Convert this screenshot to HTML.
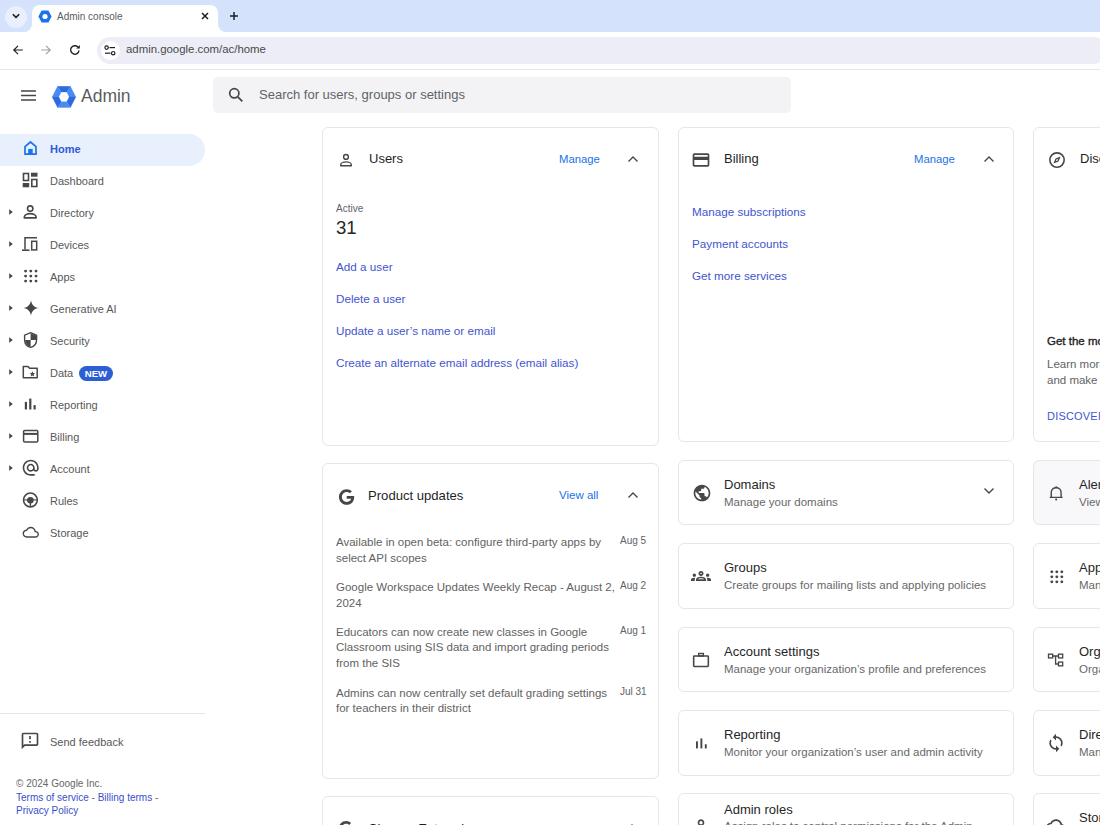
<!DOCTYPE html>
<html><head><meta charset="utf-8">
<style>
*{box-sizing:border-box;margin:0;padding:0}
html,body{width:1100px;height:825px;overflow:hidden;background:#fff;font-family:"Liberation Sans",sans-serif;color:#1f1f1f}
.abs{position:absolute}
#tabs{position:absolute;left:0;top:0;width:1100px;height:32px;background:#d5e2fc}
#tab{position:absolute;left:32px;top:5px;width:186px;height:27px;background:#fff;border-radius:8px 8px 0 0}
#tb{position:absolute;left:0;top:32px;width:1100px;height:38px;background:#fff;border-bottom:1px solid #e5e5ea}
#omni{position:absolute;left:97px;top:37px;width:1010px;height:27px;border-radius:14px;background:#ecedf6}
.txt{position:absolute;white-space:nowrap}
.card{position:absolute;border:1px solid #e6e6ea;border-radius:6px;background:#fff}
.nav{position:absolute;left:0;width:205px;height:32px}
.nav .lbl{position:absolute;left:49px;top:11px;font-size:11px;color:#444746}
.nav svg{position:absolute;left:22px;top:8px}
.arr{position:absolute;left:9px;top:13px;width:0;height:0;border-left:4px solid #3c4043;border-top:3.5px solid transparent;border-bottom:3.5px solid transparent}
.link{position:absolute;font-size:12px;color:#3b4ecc;white-space:nowrap}
</style></head><body>

<div id="tabs"></div>
<div class="abs" style="left:5px;top:6px;width:22px;height:22px;border-radius:50%;background:#e9effc"></div>
<svg class="abs" style="left:10px;top:10px" width="12" height="12" viewBox="0 0 12 12"><path d="M2.8 4.2 L6 7.4 L9.2 4.2" fill="none" stroke="#1f1f1f" stroke-width="1.6"/></svg>
<div id="tab"></div>
<svg class="abs" style="left:24px;top:24px" width="8" height="8" viewBox="0 0 8 8"><path d="M0 8 A8 8 0 0 0 8 0 L8 8 Z" fill="#fff"/></svg>
<svg class="abs" style="left:218px;top:24px" width="8" height="8" viewBox="0 0 8 8"><path d="M8 8 A8 8 0 0 1 0 0 L0 8 Z" fill="#fff"/></svg>
<svg class="abs" style="left:38px;top:10px" width="14" height="13" viewBox="0 0 14 13"><path d="M3.6 0.5 L10.4 0.5 L13.6 6.5 L10.4 12.5 L3.6 12.5 L0.4 6.5 Z" fill="#1a73e8"/><circle cx="7" cy="6.5" r="2.6" fill="#fff"/></svg>
<div class="txt" style="left:57px;top:11px;font-size:10px;color:#5c5c5c">Admin console</div>
<svg class="abs" style="left:200px;top:11px" width="10" height="10" viewBox="0 0 10 10"><path d="M2 2 L8 8 M8 2 L2 8" stroke="#1f1f1f" stroke-width="1.5"/></svg>
<svg class="abs" style="left:228px;top:10px" width="12" height="12" viewBox="0 0 12 12"><path d="M6 2 V10 M2 6 H10" stroke="#1f1f1f" stroke-width="1.5"/></svg>
<div id="tb"></div>
<svg class="abs" style="left:12px;top:44px" width="12" height="12" viewBox="0 0 12 12"><path d="M10.8 6 H2 M6 1.8 L1.8 6 L6 10.2" fill="none" stroke="#1f1f1f" stroke-width="1.2"/></svg>
<svg class="abs" style="left:40px;top:44px" width="12" height="12" viewBox="0 0 12 12"><path d="M1.2 6 H10 M6 1.8 L10.2 6 L6 10.2" fill="none" stroke="#a0a0a0" stroke-width="1.2"/></svg>
<svg class="abs" style="left:69px;top:44px" width="12" height="12" viewBox="0 0 12 12"><path d="M10 6.5 A4.2 4.2 0 1 1 8.8 3" fill="none" stroke="#1f1f1f" stroke-width="1.4"/><path d="M10.8 1 V4.6 H7.2 Z" fill="#1f1f1f"/></svg>
<div id="omni"></div>
<div class="abs" style="left:101px;top:41px;width:19px;height:19px;border-radius:50%;background:#fff"></div>
<svg class="abs" style="left:104px;top:45px" width="12" height="11" viewBox="0 0 12 11"><circle cx="2.6" cy="2.6" r="1.7" fill="none" stroke="#1f1f1f" stroke-width="1.2"/><path d="M5.5 2.6 H11" stroke="#1f1f1f" stroke-width="1.2"/><circle cx="9.2" cy="8.2" r="1.7" fill="none" stroke="#1f1f1f" stroke-width="1.2"/><path d="M1 8.2 H6.5" stroke="#1f1f1f" stroke-width="1.2"/></svg>
<div class="txt" style="left:126px;top:43px;font-size:11.4px;color:#4a4a4a">admin.google.com/ac/home</div>

<!-- app header -->
<svg class="abs" style="left:21px;top:90px" width="15" height="11" viewBox="0 0 15 11"><path d="M0 1 H15 M0 5.5 H15 M0 10 H15" stroke="#444746" stroke-width="1.3"/></svg>
<svg class="abs" style="left:52px;top:86px" width="24" height="22" viewBox="0 0 24 22"><path d="M5.6 0.2 L18.4 0.2 L14.8 6 L9.2 6 Z" fill="#2c6ae0" stroke="#2c6ae0" stroke-width="0.3"/><path d="M18.4 0.2 L23.8 11 L17.2 10.9 L14.8 6 Z" fill="#4a8af4" stroke="#4a8af4" stroke-width="0.3"/><path d="M23.8 11 L18.4 21.5 L14.8 15.8 L17.2 10.9 Z" fill="#2c6ae0" stroke="#2c6ae0" stroke-width="0.3"/><path d="M18.4 21.5 L5.6 21.5 L9.2 15.8 L14.8 15.8 Z" fill="#4a8af4" stroke="#4a8af4" stroke-width="0.3"/><path d="M5.6 21.5 L0.2 11 L6.8 10.9 L9.2 15.8 Z" fill="#2c6ae0" stroke="#2c6ae0" stroke-width="0.3"/><path d="M0.2 11 L5.6 0.2 L9.2 6 L6.8 10.9 Z" fill="#4a8af4" stroke="#4a8af4" stroke-width="0.3"/></svg>
<div class="txt" style="left:81px;top:86px;font-size:17.5px;color:#5a5c5f">Admin</div>
<div class="abs" style="left:213px;top:77px;width:578px;height:36px;background:#f3f3f6;border-radius:5px"></div>
<svg class="abs" style="left:228px;top:87px" width="16" height="16" viewBox="0 0 16 16"><circle cx="6.3" cy="6.3" r="4.6" fill="none" stroke="#444746" stroke-width="1.7"/><path d="M9.8 9.8 L14.3 14.3" stroke="#444746" stroke-width="1.8"/></svg>
<div class="txt" style="left:259px;top:87px;font-size:13px;color:#5f6368">Search for users, groups or settings</div>

<!-- sidebar highlight -->
<div class="abs" style="left:0;top:134px;width:205px;height:32px;background:#e8effd;border-radius:0 16px 16px 0"></div>

<!-- cards -->
<div class="card" style="left:322px;top:127px;width:337px;height:319px"></div>
<div class="card" style="left:678px;top:127px;width:336px;height:315px"></div>
<div class="card" style="left:1033px;top:127px;width:100px;height:315px"></div>
<div class="card" style="left:322px;top:463px;width:337px;height:316px"></div>
<div class="card" style="left:322px;top:796px;width:337px;height:100px"></div>

<div class="card" style="left:678px;top:460px;width:336px;height:65px"></div>
<div class="card" style="left:678px;top:543px;width:336px;height:66px"></div>
<div class="card" style="left:678px;top:627px;width:336px;height:65px"></div>
<div class="card" style="left:678px;top:710px;width:336px;height:66px"></div>
<div class="card" style="left:678px;top:793px;width:336px;height:65px"></div>

<div class="card" style="left:1033px;top:460px;width:100px;height:65px;background:#f8f8fa"></div>
<div class="card" style="left:1033px;top:543px;width:100px;height:66px"></div>
<div class="card" style="left:1033px;top:627px;width:100px;height:65px"></div>
<div class="card" style="left:1033px;top:710px;width:100px;height:66px"></div>
<div class="card" style="left:1033px;top:793px;width:100px;height:65px"></div>

<!-- sidebar items -->
<svg class="abs" style="left:20px;top:138px" width="20" height="20" viewBox="0 0 20 20"><path d="M5 16.2 V8.6 L10.5 4 L16 8.6 V16.2 Z" fill="none" stroke="#1a73e8" stroke-width="1.7" stroke-linejoin="round"/><rect x="8.2" y="10.9" width="4.5" height="5.5" fill="#1a73e8"/></svg>
<div class="txt" style="left:50px;top:143px;font-size:11px;font-weight:bold;color:#2f5ad6">Home</div>
<svg class="abs" style="left:20px;top:170px" width="20" height="20" viewBox="0 0 20 20"><rect x="3.5" y="3.5" width="5" height="7" fill="none" stroke="#474747" stroke-width="1.6"/><rect x="11" y="2.7" width="6.5" height="4" fill="#474747"/><rect x="2.7" y="13" width="6.5" height="4.3" fill="#474747"/><rect x="11.8" y="9.5" width="5" height="7" fill="none" stroke="#474747" stroke-width="1.6"/></svg>
<div class="txt" style="left:50px;top:175px;font-size:11px;color:#585858">Dashboard</div>
<svg class="abs" style="left:20px;top:202px" width="20" height="20" viewBox="0 0 20 20"><circle cx="10.2" cy="6.6" r="2.7" fill="none" stroke="#474747" stroke-width="1.6"/><path d="M4.3 15.9 V14.9 C4.3 12.7 7.6 11.6 10.2 11.6 C12.8 11.6 16.1 12.7 16.1 14.9 V15.9 Z" fill="none" stroke="#474747" stroke-width="1.6" stroke-linejoin="round"/></svg>
<svg class="abs" style="left:8px;top:208px" width="6" height="8" viewBox="0 0 6 8"><path d="M1.2 1.2 L4.8 4 L1.2 6.8 Z" fill="#444746"/></svg>
<div class="txt" style="left:50px;top:207px;font-size:11px;color:#585858">Directory</div>
<svg class="abs" style="left:20px;top:234px" width="20" height="20" viewBox="0 0 20 20"><path d="M17 3.7 H5 V15.5" fill="none" stroke="#474747" stroke-width="1.5"/><path d="M2 16.2 H9.5" stroke="#474747" stroke-width="1.6"/><rect x="11.7" y="7.3" width="5" height="8.6" fill="none" stroke="#474747" stroke-width="1.5"/></svg>
<svg class="abs" style="left:8px;top:240px" width="6" height="8" viewBox="0 0 6 8"><path d="M1.2 1.2 L4.8 4 L1.2 6.8 Z" fill="#444746"/></svg>
<div class="txt" style="left:50px;top:239px;font-size:11px;color:#585858">Devices</div>
<svg class="abs" style="left:20px;top:266px" width="20" height="20" viewBox="0 0 20 20"><circle cx="5.6" cy="5.1" r="1.45" fill="#474747"/><circle cx="5.6" cy="10.1" r="1.45" fill="#474747"/><circle cx="5.6" cy="15.1" r="1.45" fill="#474747"/><circle cx="10.8" cy="5.1" r="1.45" fill="#474747"/><circle cx="10.8" cy="10.1" r="1.45" fill="#474747"/><circle cx="10.8" cy="15.1" r="1.45" fill="#474747"/><circle cx="16" cy="5.1" r="1.45" fill="#474747"/><circle cx="16" cy="10.1" r="1.45" fill="#474747"/><circle cx="16" cy="15.1" r="1.45" fill="#474747"/></svg>
<svg class="abs" style="left:8px;top:272px" width="6" height="8" viewBox="0 0 6 8"><path d="M1.2 1.2 L4.8 4 L1.2 6.8 Z" fill="#444746"/></svg>
<div class="txt" style="left:50px;top:271px;font-size:11px;color:#585858">Apps</div>
<svg class="abs" style="left:21.3px;top:298px" width="20" height="20" viewBox="0 0 20 20"><path d="M10 2.3 C10.6 6.8 13.2 9.4 17.7 10 C13.2 10.6 10.6 13.2 10 17.7 C9.4 13.2 6.8 10.6 2.3 10 C6.8 9.4 9.4 6.8 10 2.3 Z" fill="#474747"/></svg>
<svg class="abs" style="left:8px;top:304px" width="6" height="8" viewBox="0 0 6 8"><path d="M1.2 1.2 L4.8 4 L1.2 6.8 Z" fill="#444746"/></svg>
<div class="txt" style="left:50px;top:303px;font-size:11px;color:#585858">Generative AI</div>
<svg class="abs" style="left:20px;top:330px" width="20" height="20" viewBox="0 0 20 20"><path d="M10.6 2.7 L16.6 5.2 V9.6 C16.6 13.4 14.2 16.6 10.6 17.4 C7 16.6 4.6 13.4 4.6 9.6 V5.2 Z" fill="none" stroke="#474747" stroke-width="1.4"/><path d="M10.6 3.2 L16.1 5.5 V10 H10.6 Z" fill="#474747"/><path d="M5.1 10 H10.6 V16.9 C7.6 16 5.5 13.4 5.1 10 Z" fill="#474747"/></svg>
<svg class="abs" style="left:8px;top:336px" width="6" height="8" viewBox="0 0 6 8"><path d="M1.2 1.2 L4.8 4 L1.2 6.8 Z" fill="#444746"/></svg>
<div class="txt" style="left:50px;top:335px;font-size:11px;color:#585858">Security</div>
<svg class="abs" style="left:20px;top:362px" width="20" height="20" viewBox="0 0 20 20"><path d="M3.3 4.6 H8 L9.7 6.3 H17.2 V15.7 H3.3 Z" fill="none" stroke="#474747" stroke-width="1.5" stroke-linejoin="round"/><path d="M12.4 9.3 L13.2 11.1 L15.1 11.2 L13.6 12.5 L14.1 14.4 L12.4 13.4 L10.7 14.4 L11.2 12.5 L9.7 11.2 L11.6 11.1 Z" fill="#474747"/></svg>
<svg class="abs" style="left:8px;top:368px" width="6" height="8" viewBox="0 0 6 8"><path d="M1.2 1.2 L4.8 4 L1.2 6.8 Z" fill="#444746"/></svg>
<div class="txt" style="left:50px;top:367px;font-size:11px;color:#585858">Data</div>
<svg class="abs" style="left:20px;top:394px" width="20" height="20" viewBox="0 0 20 20"><rect x="4.8" y="7.9" width="2.2" height="7.6" fill="#474747"/><rect x="9.2" y="4.6" width="2.2" height="10.9" fill="#474747"/><rect x="13.5" y="11.1" width="2.2" height="4.4" fill="#474747"/></svg>
<svg class="abs" style="left:8px;top:400px" width="6" height="8" viewBox="0 0 6 8"><path d="M1.2 1.2 L4.8 4 L1.2 6.8 Z" fill="#444746"/></svg>
<div class="txt" style="left:50px;top:399px;font-size:11px;color:#585858">Reporting</div>
<svg class="abs" style="left:20px;top:426px" width="20" height="20" viewBox="0 0 20 20"><rect x="3.6" y="4.5" width="14.2" height="11.4" rx="1" fill="none" stroke="#474747" stroke-width="1.5"/><rect x="3.8" y="6.9" width="13.8" height="2" fill="#474747"/></svg>
<svg class="abs" style="left:8px;top:432px" width="6" height="8" viewBox="0 0 6 8"><path d="M1.2 1.2 L4.8 4 L1.2 6.8 Z" fill="#444746"/></svg>
<div class="txt" style="left:50px;top:431px;font-size:11px;color:#585858">Billing</div>
<svg class="abs" style="left:20.8px;top:458px" width="20" height="20" viewBox="0 0 20 20"><g transform="translate(0.1 0.1) scale(0.8)"><path fill="#474747" d="M12 1.95c-5.52 0-10 4.48-10 10s4.48 10 10 10h5v-2h-5c-4.34 0-8-3.66-8-8s3.66-8 8-8 8 3.66 8 8v1.430c0 .79-.71 1.57-1.5 1.57s-1.5-.78-1.5-1.57v-1.43c0-2.76-2.24-5-5-5s-5 2.24-5 5 2.24 5 5 5c1.38 0 2.64-.56 3.54-1.47.65.89 1.77 1.47 2.96 1.47 1.97 0 3.5-1.6 3.5-3.57v-1.43c0-5.52-4.48-10-10-10zm0 13c-1.66 0-3-1.34-3-3s1.34-3 3-3 3 1.34 3 3-1.34 3-3 3z"/></g></svg>
<svg class="abs" style="left:8px;top:464px" width="6" height="8" viewBox="0 0 6 8"><path d="M1.2 1.2 L4.8 4 L1.2 6.8 Z" fill="#444746"/></svg>
<div class="txt" style="left:50px;top:463px;font-size:11px;color:#585858">Account</div>
<svg class="abs" style="left:20px;top:490px" width="20" height="20" viewBox="0 0 20 20"><circle cx="10.4" cy="10" r="6.9" fill="none" stroke="#474747" stroke-width="1.5"/><path d="M3.6 9.9 H17.2" stroke="#474747" stroke-width="1.1"/><circle cx="10.4" cy="10.3" r="3.3" fill="#474747"/><path d="M10.4 11 V17" stroke="#474747" stroke-width="1.4"/></svg>
<div class="txt" style="left:50px;top:495px;font-size:11px;color:#585858">Rules</div>
<svg class="abs" style="left:20px;top:522px" width="20" height="20" viewBox="0 0 20 20"><g transform="translate(2.6 2.1) scale(0.68)"><path fill="#474747" d="M12 6c2.62 0 4.88 1.86 5.39 4.43l.3 1.5 1.53.11c1.56.1 2.78 1.41 2.78 2.96 0 1.65-1.35 3-3 3H6c-2.21 0-4-1.79-4-4 0-2.05 1.53-3.76 3.56-3.97l1.07-.11.5-.95C8.08 7.14 9.94 6 12 6m0-2C9.11 4 6.6 5.64 5.35 8.04 2.34 8.36 0 10.91 0 14c0 3.31 2.69 6 6 6h13c2.76 0 5-2.24 5-5 0-2.64-2.05-4.78-4.65-4.96C18.67 6.59 15.64 4 12 4z"/></g></svg>
<div class="txt" style="left:50px;top:527px;font-size:11px;color:#585858">Storage</div>
<div class="abs" style="left:79px;top:366px;width:34px;height:15px;border-radius:8px;background:#2c5fd4"></div>
<div class="txt" style="left:79px;top:367.5px;width:34px;text-align:center;font-size:9.6px;font-weight:bold;color:#fff">NEW</div>
<svg class="abs" style="left:20px;top:731px" width="20" height="20" viewBox="0 0 20 20"><g transform="scale(0.8333)"><path fill="#474747" d="M20 2H4c-1.1 0-1.99.9-1.99 2L2 22l4-4h14c1.1 0 2-.9 2-2V4c0-1.1-.9-2-2-2zm0 14H5.17l-.59.59-.58.58V4h16v12zm-9-4h2v2h-2zm0-6h2v4h-2z"/></g></svg>
<div class="txt" style="left:50px;top:736px;font-size:11px;color:#585858">Send feedback</div>
<div class="txt" style="left:16px;top:778px;font-size:10px;color:#666">© 2024 Google Inc.</div>
<div class="txt" style="left:16px;top:792px;font-size:10px;color:#5f6368"><span style="color:#3b4ecc">Terms of service</span> - <span style="color:#3b4ecc">Billing terms</span> -</div>
<div class="txt" style="left:16px;top:804.6px;font-size:10px;color:#3b4ecc">Privacy Policy</div>
<!-- sidebar divider -->
<div class="abs" style="left:0;top:713px;width:205px;height:1px;background:#e3e3e3"></div>

<!-- CARDS -->
<svg class="abs" style="left:336px;top:150px" width="20" height="20" viewBox="0 0 20 20"><circle cx="10" cy="6.9" r="2.4" fill="none" stroke="#474747" stroke-width="1.4"/><path d="M4.7 15.7 V15 C4.7 12.9 7.8 11.9 10 11.9 C12.2 11.9 15.3 12.9 15.3 15 V15.7 Z" fill="none" stroke="#474747" stroke-width="1.4" stroke-linejoin="round"/></svg>
<div class="txt" style="left:369px;top:151.2px;font-size:13px;color:#1f1f1f">Users</div>
<div class="txt" style="left:559px;top:153.3px;font-size:11.3px;color:#1a73e8">Manage</div>
<svg class="abs" style="left:627px;top:154.5px" width="12" height="8" viewBox="0 0 12 8"><path d="M1.5 6.5 L6 2 L10.5 6.5" fill="none" stroke="#474747" stroke-width="1.4"/></svg>
<div class="txt" style="left:336px;top:202.6px;font-size:10px;color:#5f6368">Active</div>
<div class="txt" style="left:336px;top:217.1px;font-size:18.6px;color:#262626">31</div>
<div class="txt" style="left:336px;top:259.6px;font-size:11.7px;color:#4355cf">Add a user</div>
<div class="txt" style="left:336px;top:291.6px;font-size:11.7px;color:#4355cf">Delete a user</div>
<div class="txt" style="left:336px;top:323.6px;font-size:11.7px;color:#4355cf">Update a user’s name or email</div>
<div class="txt" style="left:336px;top:355.6px;font-size:11.7px;color:#4355cf">Create an alternate email address (email alias)</div>
<svg class="abs" style="left:691px;top:150px" width="20" height="20" viewBox="0 0 24 24"><path fill="#474747" d="M20 4H4c-1.11 0-1.99.89-1.99 2L2 18c0 1.11.89 2 2 2h16c1.11 0 2-.89 2-2V6c0-1.11-.89-2-2-2zm0 14H4v-6h16v6zm0-10H4V6h16v2z"/></svg>
<div class="txt" style="left:724px;top:151.2px;font-size:13px;color:#1f1f1f">Billing</div>
<div class="txt" style="left:914px;top:153.3px;font-size:11.3px;color:#1a73e8">Manage</div>
<svg class="abs" style="left:982.5px;top:154.5px" width="12" height="8" viewBox="0 0 12 8"><path d="M1.5 6.5 L6 2 L10.5 6.5" fill="none" stroke="#474747" stroke-width="1.4"/></svg>
<div class="txt" style="left:692px;top:205.2px;font-size:11.7px;color:#4355cf">Manage subscriptions</div>
<div class="txt" style="left:692px;top:237.2px;font-size:11.7px;color:#4355cf">Payment accounts</div>
<div class="txt" style="left:692px;top:269.2px;font-size:11.7px;color:#4355cf">Get more services</div>
<svg class="abs" style="left:1047px;top:150px" width="20" height="20" viewBox="0 0 24 24"><circle cx="12" cy="12" r="8.6" fill="none" stroke="#474747" stroke-width="1.9"/><path d="M14.8 9.2 L13.2 13.2 L9.2 14.8 L10.8 10.8 Z" fill="none" stroke="#474747" stroke-width="1.6"/></svg>
<div class="txt" style="left:1080px;top:151.2px;font-size:13px;color:#1f1f1f">Discover</div>
<div class="txt" style="left:1047px;top:335.4px;font-size:11.5px;color:#1f1f1f;-webkit-text-stroke:0.35px #1f1f1f">Get the most out of Google Workspace</div>
<div class="txt" style="left:1047px;top:358.4px;font-size:11.5px;color:#5f6368">Learn more about features</div>
<div class="txt" style="left:1047px;top:374.4px;font-size:11.5px;color:#5f6368">and make the most of them</div>
<div class="txt" style="left:1047px;top:409.9px;font-size:11px;color:#4355cf;letter-spacing:0.2px">DISCOVER</div>
<svg class="abs" style="left:335.5px;top:486.5px" width="21" height="21" viewBox="0 0 24 24"><path fill="#474747" d="M12.24 10.29v3.22h5.02c-.2 1.2-1.5 3.52-5.02 3.52-3.02 0-5.49-2.5-5.49-5.6s2.47-5.6 5.49-5.6c1.72 0 2.87.73 3.53 1.36l2.4-2.32C16.63 3.43 14.64 2.5 12.24 2.5 7.33 2.5 3.35 6.48 3.35 11.43s3.98 8.93 8.89 8.93c5.13 0 8.54-3.61 8.54-8.69 0-.58-.06-1.03-.14-1.47z"/></svg>
<div class="txt" style="left:368px;top:487.7px;font-size:13.1px;color:#1f1f1f">Product updates</div>
<div class="txt" style="left:559px;top:489.4px;font-size:11.5px;color:#1a73e8">View all</div>
<svg class="abs" style="left:627px;top:491px" width="12" height="8" viewBox="0 0 12 8"><path d="M1.5 6.5 L6 2 L10.5 6.5" fill="none" stroke="#474747" stroke-width="1.4"/></svg>
<div class="txt" style="left:336px;top:536.2px;font-size:11.5px;color:#626262">Available in open beta: configure third-party apps by</div>
<div class="txt" style="left:336px;top:551.9px;font-size:11.5px;color:#626262">select API scopes</div>
<div class="txt" style="left:620px;top:535.3px;font-size:10px;color:#5f6368">Aug 5</div>
<div class="txt" style="left:336px;top:581.2px;font-size:11.5px;color:#626262">Google Workspace Updates Weekly Recap - August 2,</div>
<div class="txt" style="left:336px;top:596.9px;font-size:11.5px;color:#626262">2024</div>
<div class="txt" style="left:620px;top:580.3px;font-size:10px;color:#5f6368">Aug 2</div>
<div class="txt" style="left:336px;top:625.7px;font-size:11.5px;color:#626262">Educators can now create new classes in Google</div>
<div class="txt" style="left:336px;top:641.4px;font-size:11.5px;color:#626262">Classroom using SIS data and import grading periods</div>
<div class="txt" style="left:336px;top:657.1px;font-size:11.5px;color:#626262">from the SIS</div>
<div class="txt" style="left:620px;top:624.8px;font-size:10px;color:#5f6368">Aug 1</div>
<div class="txt" style="left:336px;top:686.7px;font-size:11.5px;color:#626262">Admins can now centrally set default grading settings</div>
<div class="txt" style="left:336px;top:702.4px;font-size:11.5px;color:#626262">for teachers in their district</div>
<div class="txt" style="left:620px;top:685.8px;font-size:10px;color:#5f6368">Jul 31</div>
<svg class="abs" style="left:336px;top:819px" width="20" height="20" viewBox="0 0 24 24"><path fill="#474747" d="M12.24 10.29v3.22h5.02c-.2 1.2-1.5 3.52-5.02 3.52-3.02 0-5.49-2.5-5.49-5.6s2.47-5.6 5.49-5.6c1.72 0 2.87.73 3.53 1.36l2.4-2.32C16.63 3.43 14.64 2.5 12.24 2.5 7.33 2.5 3.35 6.48 3.35 11.43s3.980 8.93 8.89 8.93c5.13 0 8.54-3.61 8.54-8.69 0-.58-.06-1.03-.14-1.47z"/></svg>
<div class="txt" style="left:368px;top:820.9px;font-size:13.1px;color:#1f1f1f">Chrome Enterprise</div>
<svg class="abs" style="left:626px;top:823px" width="12" height="8" viewBox="0 0 12 8"><path d="M1.5 6.5 L6 2 L10.5 6.5" fill="none" stroke="#474747" stroke-width="1.4"/></svg>
<svg class="abs" style="left:692px;top:482.5px" width="20" height="20" viewBox="0 0 24 24"><path fill="#474747" d="M12 2C6.48 2 2 6.48 2 12s4.48 10 10 10 10-4.48 10-10S17.52 2 12 2zm-1 17.930c-3.95-.49-7-3.85-7-7.93 0-.62.08-1.21.21-1.79L9 15v1c0 1.1.9 2 2 2v1.93zm6.9-2.54c-.26-.81-1-1.39-1.9-1.39h-1v-3c0-.55-.45-1-1-1H8v-2h2c.55 0 1-.45 1-1V7h2c1.1 0 2-.9 2-2v-.41c2.93 1.19 5 4.06 5 7.41 0 2.08-.8 3.97-2.1 5.39z"/></svg>
<div class="txt" style="left:724px;top:477.3px;font-size:13px;color:#262626">Domains</div>
<div class="txt" style="left:724px;top:496.3px;font-size:11.5px;color:#686868">Manage your domains</div>
<svg class="abs" style="left:982.5px;top:487px" width="12" height="8" viewBox="0 0 12 8"><path d="M1.5 1.5 L6 6 L10.5 1.5" fill="none" stroke="#474747" stroke-width="1.4"/></svg>
<svg class="abs" style="left:691px;top:565.5px" width="20" height="20" viewBox="0 0 24 24"><path fill="#474747" d="M4 13c1.1 0 2-.9 2-2s-.9-2-2-2-2 .9-2 2 .9 2 2 2zm1.13 1.1c-.37-.06-.74-.1-1.13-.1-.99 0-1.93.21-2.78.58C.48 14.9 0 15.62 0 16.43V18h4.5v-1.61c0-.83.23-1.61.63-2.29zM20 13c1.1 0 2-.9 2-2s-.9-2-2-2-2 .9-2 2 .9 2 2 2zm4 3.43c0-.81-.48-1.53-1.22-1.85-.85-.37-1.79-.58-2.78-.58-.39 0-.76.04-1.13.1.4.68.63 1.46.63 2.29V18H24v-1.57zm-7.76-2.78c-1.17-.52-2.61-.9-4.24-.9-1.63 0-3.07.39-4.24.9C6.68 14.13 6 15.21 6 16.39V18h12v-1.61c0-1.18-.68-2.26-1.76-2.74zM8.07 16c.09-.23.13-.39.91-.69.97-.38 1.99-.56 3.020-.56s2.05.18 3.02.56c.77.3.81.46.91.69H8.07zM12 8c.55 0 1 .45 1 1s-.45 1-1 1-1-.45-1-1 .45-1 1-1m0-2c-1.66 0-3 1.34-3 3s1.34 3 3 3 3-1.34 3-3-1.34-3-3-3z"/></svg>
<div class="txt" style="left:724px;top:560.3px;font-size:13px;color:#262626">Groups</div>
<div class="txt" style="left:724px;top:579.3px;font-size:11.5px;color:#686868">Create groups for mailing lists and applying policies</div>
<svg class="abs" style="left:691px;top:649.5px" width="20" height="20" viewBox="0 0 24 24"><rect x="3.2" y="7.2" width="17.6" height="12.6" rx="0.8" fill="none" stroke="#474747" stroke-width="1.9"/><rect x="9.2" y="4.2" width="5.6" height="3" fill="none" stroke="#474747" stroke-width="1.7"/></svg>
<div class="txt" style="left:724px;top:644.3px;font-size:13px;color:#262626">Account settings</div>
<div class="txt" style="left:724px;top:663.3px;font-size:11.5px;color:#686868">Manage your organization’s profile and preferences</div>
<svg class="abs" style="left:691px;top:732.5px" width="20" height="20" viewBox="0 0 24 24"><rect x="6" y="10" width="2.3" height="8.5" fill="#474747"/><rect x="11.3" y="6.5" width="2.3" height="12" fill="#474747"/><rect x="16.6" y="13.5" width="2.3" height="5" fill="#474747"/></svg>
<div class="txt" style="left:724px;top:727.3px;font-size:13px;color:#262626">Reporting</div>
<div class="txt" style="left:724px;top:746.3px;font-size:11.5px;color:#686868">Monitor your organization’s user and admin activity</div>
<svg class="abs" style="left:691px;top:816px" width="20" height="20" viewBox="0 0 24 24"><path fill="#474747" d="M12 6c1.1 0 2 .9 2 2s-.9 2-2 2-2-.9-2-2 .9-2 2-2m0 10c2.7 0 5.8 1.29 6 2H6c.23-.72 3.31-2 6-2m0-12C9.79 4 8 5.79 8 8s1.79 4 4 4 4-1.79 4-4-1.79-4-4-4zm0 10c-2.67 0-8 1.34-8 4v3h16v-3c0-2.66-5.330-4-8-4z"/></svg>
<div class="txt" style="left:724px;top:802.3px;font-size:13px;color:#262626">Admin roles</div>
<div class="txt" style="left:724px;top:820.4px;font-size:11.5px;color:#686868">Assign roles to control permissions for the Admin</div>
<svg class="abs" style="left:1046px;top:482.5px" width="20" height="20" viewBox="0 0 24 24"><path d="M6.3 17 V11 C6.3 7.8 8.8 5.6 12.2 5.6 C15.6 5.6 18.1 7.8 18.1 11 V17 M4.5 17.2 H19.9" fill="none" stroke="#474747" stroke-width="1.7"/><path d="M12.2 3.8 V5.6" stroke="#474747" stroke-width="1.6"/><circle cx="12.2" cy="19.8" r="1.3" fill="#474747"/></svg>
<div class="txt" style="left:1079px;top:477.3px;font-size:13px;color:#262626">Alerts</div>
<div class="txt" style="left:1079px;top:496.3px;font-size:11.5px;color:#686868">View important notifications</div>
<svg class="abs" style="left:1046px;top:565.5px" width="20" height="20" viewBox="0 0 24 24"><circle cx="7" cy="7" r="1.75" fill="#474747"/><circle cx="7" cy="13" r="1.75" fill="#474747"/><circle cx="7" cy="19" r="1.75" fill="#474747"/><circle cx="13" cy="7" r="1.75" fill="#474747"/><circle cx="13" cy="13" r="1.75" fill="#474747"/><circle cx="13" cy="19" r="1.75" fill="#474747"/><circle cx="19" cy="7" r="1.75" fill="#474747"/><circle cx="19" cy="13" r="1.75" fill="#474747"/><circle cx="19" cy="19" r="1.75" fill="#474747"/></svg>
<div class="txt" style="left:1079px;top:560.3px;font-size:13px;color:#262626">Apps</div>
<div class="txt" style="left:1079px;top:579.3px;font-size:11.5px;color:#686868">Manage apps and services</div>
<svg class="abs" style="left:1046px;top:649.5px" width="20" height="20" viewBox="0 0 24 24"><rect x="3" y="5" width="5" height="4.5" fill="none" stroke="#474747" stroke-width="1.6"/><rect x="15" y="5" width="5" height="4.5" fill="none" stroke="#474747" stroke-width="1.6"/><rect x="15" y="14.5" width="5" height="4.5" fill="none" stroke="#474747" stroke-width="1.6"/><path d="M8 7.2 H15 M11.5 7.2 V16.8 H15" fill="none" stroke="#474747" stroke-width="1.6"/></svg>
<div class="txt" style="left:1079px;top:644.3px;font-size:13px;color:#262626">Organizational units</div>
<div class="txt" style="left:1079px;top:663.3px;font-size:11.5px;color:#686868">Organize users</div>
<svg class="abs" style="left:1046px;top:732.5px" width="20" height="20" viewBox="0 0 24 24"><path fill="#474747" d="M12 4V1L8 5l4 4V6c3.31 0 6 2.69 6 6 0 1.01-.25 1.97-.7 2.8l1.46 1.46C19.54 15.03 20 13.57 20 12c0-4.42-3.58-8-8-8zm0 14c-3.31 0-6-2.69-6-6 0-1.01.25-1.97.7-2.8L5.24 7.74C4.46 8.97 4 10.43 4 12c0 4.42 3.58 8 8 8v3l4-4-4-4v3z"/></svg>
<div class="txt" style="left:1079px;top:727.3px;font-size:13px;color:#262626">Directory sync</div>
<div class="txt" style="left:1079px;top:746.3px;font-size:11.5px;color:#686868">Manage directory sync</div>
<svg class="abs" style="left:1046px;top:815.5px" width="20" height="20" viewBox="0 0 24 24"><path fill="#474747" d="M12 6c2.62 0 4.88 1.86 5.39 4.43l.3 1.5 1.53.11c1.56.1 2.78 1.41 2.78 2.96 0 1.65-1.35 3-3 3H6c-2.21 0-4-1.790-4-4 0-2.05 1.53-3.76 3.56-3.97l1.07-.11.5-.95C8.08 7.14 9.94 6 12 6m0-2C9.11 4 6.6 5.64 5.35 8.04 2.34 8.36 0 10.91 0 14c0 3.31 2.69 6 6 6h13c2.76 0 5-2.24 5-5 0-2.64-2.05-4.78-4.65-4.96C18.67 6.59 15.64 4 12 4z"/></svg>
<div class="txt" style="left:1079px;top:810.3px;font-size:13px;color:#262626">Storage</div>
<div class="txt" style="left:1079px;top:829.3px;font-size:11.5px;color:#686868">Manage storage</div>
<!-- /CARDS -->
</body></html>
